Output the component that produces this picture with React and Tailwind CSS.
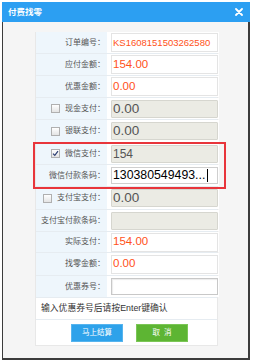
import React from "react";

const FONT = { fontFamily: '"Liberation Sans", Arial, "Noto Sans CJK SC", sans-serif' };

function Checkbox({ checked }) {
  return (
    <span className="inline-flex items-center justify-center w-[9px] h-[9px] border border-[#b0b0b0] bg-gradient-to-b from-white to-[#e4e4e4] mr-[5px]">
      {checked && (
        <svg width="7" height="7" viewBox="0 0 7 7">
          <path d="M1 3.6 L2.8 5.4 L6 1.2" fill="none" stroke="#2c3e73" strokeWidth="1.2" />
        </svg>
      )}
    </span>
  );
}

function Row({ h, label, cb, checked, children, labelSize = "text-[8px]" }) {
  return (
    <div className={`flex ${h} border-b border-[#e6ecf1]`}>
      <div className={`w-[71px] shrink-0 bg-[#eef6fc] flex items-center justify-end pr-[2px] ${labelSize} text-[#555]`}>
        {cb && <Checkbox checked={checked} />}
        <span>{label}：</span>
      </div>
      <div className="flex-1 bg-white flex items-center pl-[4px] pr-[1px]">{children}</div>
    </div>
  );
}

function WhiteInput({ children, cls = "" }) {
  return (
    <div className={`w-[107px] h-[19px] bg-white border border-[#e4e4e4] flex items-center pl-[1px] overflow-hidden whitespace-nowrap ${cls}`}>
      {children}
    </div>
  );
}

function GrayInput({ children }) {
  return (
    <div className="w-[107px] h-[18px] bg-[#ebebe4] border border-[#d6d6cf] rounded-[1px] flex items-center pl-[1px] overflow-hidden whitespace-nowrap text-[13.5px] text-[#555] leading-none">
      {children}
    </div>
  );
}

export default function App() {
  return (
    <div className="w-[253px] h-[364px] bg-white" style={FONT}>
      <div className="ml-[2px] pt-[2px] w-[248px]">
        <div className="h-[20px] bg-[#2c9ff2] flex items-center justify-between pl-[6px] pr-[7px]">
          <span className="text-white font-bold text-[8.5px] leading-none">付费找零</span>
          <svg width="8" height="8" viewBox="0 0 8 8">
            <path d="M1 1 L7 7 M7 1 L1 7" stroke="white" strokeWidth="1.8" strokeLinecap="round" />
          </svg>
        </div>
        <div className="h-[338px] bg-[#f5f5f5] border-l border-r-2 border-b-2 border-[#3c3c3c] pl-[32px] pt-[10px]">
          <div className="relative w-[183px] border border-[#e8e8e8] border-b-0 border-t-0">
            <Row h="h-[22px]" label="订单编号">
              <WhiteInput>
                <span className="text-[9.5px] text-[#ff5219] leading-none">KS1608151503262580</span>
              </WhiteInput>
            </Row>
            <Row h="h-[22px]" label="应付金额">
              <WhiteInput>
                <span className="text-[11.5px] text-[#ff5219] leading-none">154.00</span>
              </WhiteInput>
            </Row>
            <Row h="h-[22px]" label="优惠金额">
              <WhiteInput>
                <span className="text-[11.5px] text-[#ff5219] leading-none">0.00</span>
              </WhiteInput>
            </Row>
            <Row h="h-[22px]" label="现金支付" cb>
              <GrayInput>0.00</GrayInput>
            </Row>
            <Row h="h-[23px]" label="银联支付" cb>
              <GrayInput>0.00</GrayInput>
            </Row>
            <Row h="h-[22px]" label="微信支付" cb checked>
              <GrayInput>
                <span className="text-[12px]">154</span>
              </GrayInput>
            </Row>
            <Row h="h-[22px]" label="微信付款条码">
              <div className="w-[107px] h-[17px] bg-white border border-[#cfcfcf] flex items-center pl-[1px] overflow-hidden whitespace-nowrap">
                <span className="text-[12.3px] text-black leading-none">130380549493...</span>
                <span className="w-px h-[13px] bg-black ml-[2px]" />
              </div>
            </Row>
            <Row h="h-[23px]" label="支付宝支付" cb>
              <GrayInput>0.00</GrayInput>
            </Row>
            <Row h="h-[22px]" label="支付宝付款条码">
              <GrayInput></GrayInput>
            </Row>
            <Row h="h-[21px]" label="实际支付">
              <WhiteInput>
                <span className="text-[11.5px] text-[#ff5219] leading-none">154.00</span>
              </WhiteInput>
            </Row>
            <Row h="h-[23px]" label="找零金额">
              <WhiteInput>
                <span className="text-[11.5px] text-[#ff5219] leading-none">0.00</span>
              </WhiteInput>
            </Row>
            <Row h="h-[22px]" label="优惠券号">
              <div className="w-[107px] h-[17px] bg-white border border-[#c8c8c8] shadow-[inset_1px_1px_1px_rgba(0,0,0,0.08)]" />
            </Row>
            <div className="h-[22px] bg-white border-b border-[#e6ecf1] flex items-center pl-[5px] text-[8.8px] text-[#333]">
              输入优惠券号后请按Enter键确认
            </div>
            <div className="h-[26px] bg-white border-b border-[#e8e8e8] flex items-center pl-[35px] gap-[13px]">
              <div className="w-[52px] h-[18px] bg-[#2ea2ea] border border-[#56b4ee] flex items-center justify-center text-white text-[7.5px]">
                马上结算
              </div>
              <div className="w-[52px] h-[18px] bg-[#5db533] border border-[#7bc656] flex items-center justify-center text-white text-[7.5px]">
                取&nbsp;&nbsp;消
              </div>
            </div>
            <div className="absolute left-[-3px] top-[110px] w-[193px] h-[47px] border-2 border-[#e8353b]" />
          </div>
        </div>
      </div>
    </div>
  );
}
